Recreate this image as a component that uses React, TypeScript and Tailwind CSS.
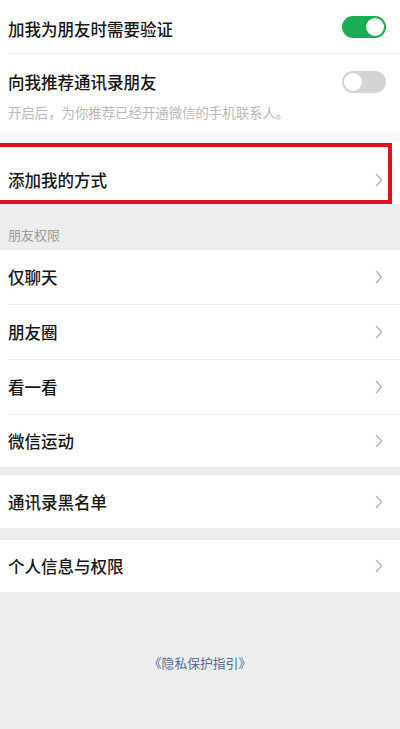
import React from 'react';

const font = { fontFamily: '"Noto Sans CJK SC", "Noto Sans", sans-serif' };

function Chevron() {
  return (
    <svg width="8" height="14" viewBox="0 0 8 14" fill="none" className="shrink-0">
      <path d="M1.5 1.5l5 5.5-5 5.5" stroke="#b5b5b5" strokeWidth="1.5" strokeLinecap="round" strokeLinejoin="round" />
    </svg>
  );
}

function Toggle({ on }: { on: boolean }) {
  return (
    <div
      className={`relative w-[44px] h-[22px] rounded-full shrink-0 ${
        on ? 'bg-[#1aad55]' : 'bg-[#d4d4d4]'
      }`}
    >
      <div
        className={`absolute top-[2px] w-[18px] h-[18px] rounded-full bg-white ${
          on ? 'right-[2px]' : 'left-[2px]'
        }`}
      />
    </div>
  );
}

function Divider() {
  return <div className="ml-2 h-px bg-[#ececec]" />;
}

function LinkRow({ label, height }: { label: string; height: string }) {
  return (
    <div className={`flex items-center justify-between bg-white pl-2 pr-[17px] ${height}`}>
      <span className="text-[16.5px] leading-[24px] font-medium text-[#161616]">{label}</span>
      <Chevron />
    </div>
  );
}

export default function App() {
  return (
    <div className="w-[400px] h-[729px] overflow-hidden bg-[#ededed] flex flex-col" style={font}>
      <div className="bg-white">
        <div className="flex items-center justify-between h-[53px] pl-2 pr-[14px]">
          <span className="pt-[5px] text-[16.5px] leading-[24px] font-medium text-[#161616]">加我为朋友时需要验证</span>
          <Toggle on />
        </div>
        <Divider />
        <div className="pl-2 pr-[14px] pt-[16px] pb-[12px]">
          <div className="flex items-center justify-between">
            <span className="text-[16.5px] leading-[24px] font-medium text-[#161616]">向我推荐通讯录朋友</span>
            <Toggle on={false} />
          </div>
          <p className="mt-[9px] text-[13.4px] leading-[18px] text-[#b8b8b8]">
            开启后，为你推荐已经开通微信的手机联系人。
          </p>
        </div>
      </div>

      <div className="h-[8px] bg-[#f8f8f8]" />

      <div className="relative bg-white h-[63px] pt-[15px] pl-2 pr-[17px] flex items-center justify-between">
        <span className="text-[16.5px] leading-[24px] font-medium text-[#161616]">添加我的方式</span>
        <Chevron />
        <div className="absolute top-[2px] bottom-0 left-[-6px] right-[8px] border-4 border-[#e2101c] pointer-events-none" />
      </div>

      <div className="h-[46px] pt-[22px] pl-2 text-[13px] leading-[18px] text-[#9a9a9a]">朋友权限</div>

      <div className="bg-white">
        <LinkRow label="仅聊天" height="h-[54px]" />
        <Divider />
        <LinkRow label="朋友圈" height="h-[54px]" />
        <Divider />
        <LinkRow label="看一看" height="h-[54px]" />
        <Divider />
        <LinkRow label="微信运动" height="h-[52px]" />
      </div>

      <div className="h-[8px]" />
      <LinkRow label="通讯录黑名单" height="h-[53px]" />
      <div className="h-[12px]" />
      <LinkRow label="个人信息与权限" height="h-[52px]" />

      <div className="flex-1 pt-[62px] text-center text-[12.8px] leading-[18px] text-[#576b95]">
        《隐私保护指引》
      </div>
    </div>
  );
}
